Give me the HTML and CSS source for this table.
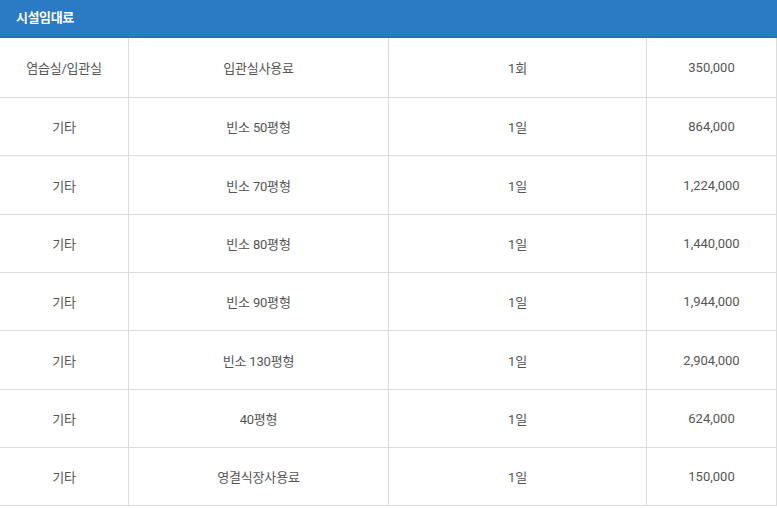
FILE: index.html
```html
<!DOCTYPE html>
<html lang="ko">
<head>
<meta charset="utf-8">
<title>시설임대료</title>
<link rel="stylesheet" href="styles.css">
</head>
<body>
<section class="fee">
  <h2 class="fee-title">시설임대료</h2>
  <div class="fee-grid">
    <div class="cell">염습실/입관실</div><div class="cell">입관실사용료</div><div class="cell">1회</div><div class="cell">350,000</div>
    <div class="cell">기타</div><div class="cell">빈소 50평형</div><div class="cell">1일</div><div class="cell">864,000</div>
    <div class="cell">기타</div><div class="cell">빈소 70평형</div><div class="cell">1일</div><div class="cell">1,224,000</div>
    <div class="cell">기타</div><div class="cell">빈소 80평형</div><div class="cell">1일</div><div class="cell">1,440,000</div>
    <div class="cell">기타</div><div class="cell">빈소 90평형</div><div class="cell">1일</div><div class="cell">1,944,000</div>
    <div class="cell">기타</div><div class="cell">빈소 130평형</div><div class="cell">1일</div><div class="cell">2,904,000</div>
    <div class="cell">기타</div><div class="cell">40평형</div><div class="cell">1일</div><div class="cell">624,000</div>
    <div class="cell">기타</div><div class="cell">영결식장사용료</div><div class="cell">1일</div><div class="cell">150,000</div>
  </div>
</section>
</body>
</html>
```
FILE: styles.css
```css
* { box-sizing: border-box; }
html, body { margin: 0; padding: 0; background: #fff; }
body {
  font-family: Roboto, "Noto Sans CJK KR", sans-serif;
  width: 777px;
}
.fee-title {
  margin: 0;
  height: 38px;
  background: #2a7bc4;
  border-bottom: 2px solid #2572b8;
  color: #fff;
  font-size: 13px;
  font-weight: 700;
  letter-spacing: -0.4px;
  line-height: 36px;
  padding-left: 16px;
}
.fee-grid {
  display: grid;
  grid-template-columns: 129px 260px 258px 130px;
  grid-template-rows: 60px 58px 59px 58px 58px 59px 58px 58px;
}
.cell {
  display: flex;
  align-items: center;
  justify-content: center;
  border-right: 1px solid #dcdcdc;
  border-bottom: 1px solid #dcdcdc;
  color: #555;
  font-size: 13px;
  letter-spacing: -0.2px;
}
.cell:nth-child(4n) { letter-spacing: 0; }
```
